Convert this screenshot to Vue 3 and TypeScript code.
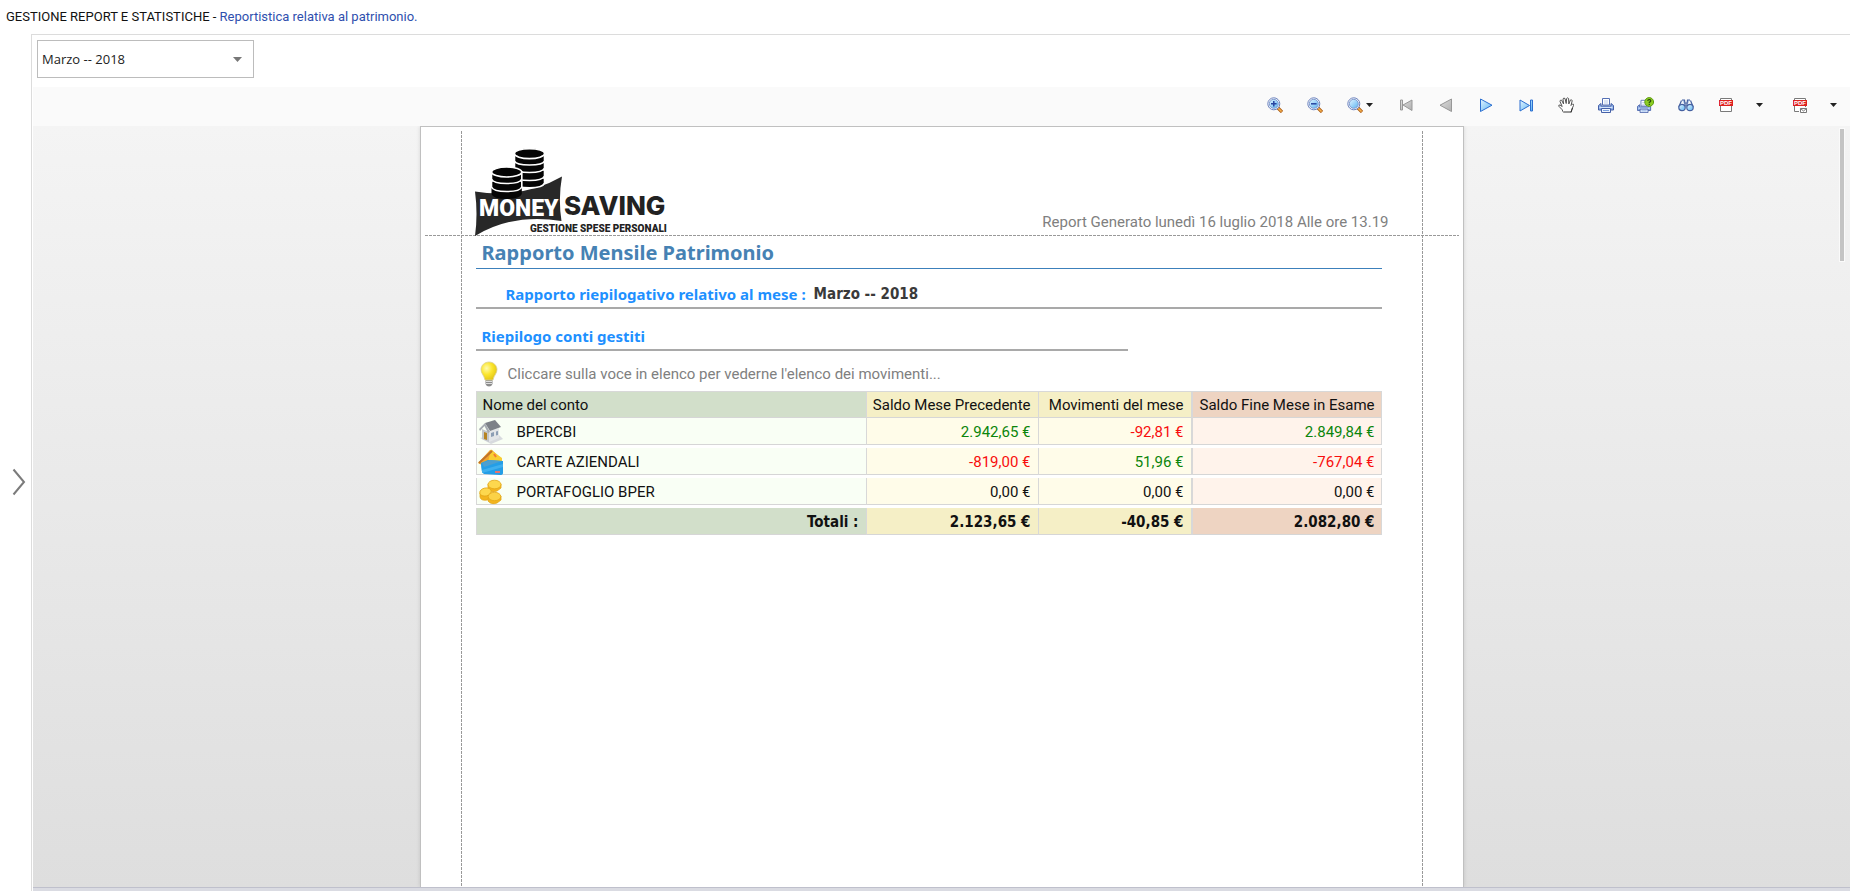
<script setup lang="ts">
import { ref } from 'vue'

interface Account {
  name: string
  icon: 'house' | 'cards' | 'coins'
  previous: number
  movements: number
  final: number
}

const months = ['Gennaio -- 2018', 'Febbraio -- 2018', 'Marzo -- 2018', 'Aprile -- 2018']
const month = ref('Marzo -- 2018')

const accounts: Account[] = [
  { name: 'BPERCBI', icon: 'house', previous: 2942.65, movements: -92.81, final: 2849.84 },
  { name: 'CARTE AZIENDALI', icon: 'cards', previous: -819, movements: 51.96, final: -767.04 },
  { name: 'PORTAFOGLIO BPER', icon: 'coins', previous: 0, movements: 0, final: 0 },
]

const sum = (key: 'previous' | 'movements' | 'final') =>
  accounts.reduce((total, account) => total + account[key], 0)

const money = (value: number) => {
  const [whole, cents] = Math.abs(value).toFixed(2).split('.')
  return `${value < 0 ? '-' : ''}${whole.replace(/\B(?=(\d{3})+$)/g, '.')},${cents} €`
}

const tone = (value: number) => (value > 0 ? 'positive' : value < 0 ? 'negative' : '')
</script>

<template>
  <div class="app">
    <header class="heading">
      <span>GESTIONE REPORT E STATISTICHE - </span><span class="subject">Reportistica relativa al patrimonio.</span>
    </header>

    <div class="body">
      <button class="expander" type="button" aria-label="Espandi menu">
        <svg width="14" height="28" viewBox="0 0 14 28"><path d="M1.500 1.500L12 14L1.500 26.500" fill="none" stroke="#7b7b7b" stroke-width="2" /></svg>
      </button>

      <main class="panel">
        <div class="filter">
          <div class="picker">
            <select v-model="month" aria-label="Mese">
              <option v-for="m in months" :key="m">{{ m }}</option>
            </select>
            <svg class="picker-arrow" width="9" height="5" viewBox="0 0 9 5"><path d="M0 0H9L4.500 5Z" fill="#777" /></svg>
          </div>
        </div>

        <div class="toolbar" role="toolbar">
          <svg width="0" height="0" class="defs">
            <defs>
              <linearGradient id="blue" x1="0" y1="0" x2="1" y2="1"><stop offset="0" stop-color="#e4f5ff" /><stop offset="1" stop-color="#5bb4f3" /></linearGradient>
              <linearGradient id="grey" x1="0" y1="0" x2="1" y2="1"><stop offset="0" stop-color="#dedede" /><stop offset="1" stop-color="#b0b0b0" /></linearGradient>
              <g id="lens">
                <path d="M10.500 10.500L15 15" stroke="#a8560f" stroke-width="3.200" />
                <path d="M11 11L14.600 14.600" stroke="#f5b04c" stroke-width="1.600" />
                <circle cx="6.800" cy="6.800" r="6" fill="#fff" stroke="#6c82bd" />
                <circle cx="6.800" cy="6.800" r="4.500" fill="url(#blue)" stroke="#7f9bd0" />
              </g>
              <g id="printer">
                <path d="M4.500 1.500H11.500V8H4.500Z" fill="#fff" stroke="#5570b5" />
                <path d="M6 4H10M6 6H10" stroke="#b9cbea" />
                <path d="M3 6.500V9H13V6.500L15.500 8.500V13H.500V8.500Z" fill="#8fb0e6" stroke="#4560a8" />
                <path d="M1.500 10.500H14.500" stroke="#d5e4fb" />
                <path d="M3.500 11.500H12.500V15.500H3.500Z" fill="#eef5ff" stroke="#4560a8" />
                <path d="M5 13.500H11" stroke="#7ba1df" />
              </g>
              <g id="pdf">
                <path d="M2.500 8V14.500H13.500V8" fill="#fff" stroke="#7a7a7a" />
                <path d="M2.500 3V1.500H13.500V3" fill="#fff" stroke="#7a7a7a" />
                <rect x="1" y="3" width="14" height="6" fill="#de1f1f" />
              </g>
            </defs>
          </svg>

          <button type="button" aria-label="Ingrandisci"><svg width="16" height="16"><use href="#lens" /><path d="M4 6.800H9.600M6.800 4V9.600" stroke="#2744a0" stroke-width="1.500" /></svg></button>
          <button type="button" aria-label="Riduci"><svg width="16" height="16"><use href="#lens" /><path d="M4 6.800H9.600" stroke="#2744a0" stroke-width="1.500" /></svg></button>
          <button type="button" class="with-arrow" aria-label="Zoom">
            <svg width="16" height="16"><use href="#lens" /></svg>
            <svg width="7" height="4"><path d="M0 0H7L3.500 4Z" fill="#222" /></svg>
          </button>
          <button type="button" aria-label="Prima pagina"><svg width="16" height="16"><path d="M2.500 3V13H4.500V3Z M14 3V13.500L5 8Z" fill="url(#grey)" stroke="#989898" /></svg></button>
          <button type="button" aria-label="Pagina precedente"><svg width="16" height="16"><path d="M13.500 2V14.500L2 8.200Z" fill="url(#grey)" stroke="#989898" /></svg></button>
          <button type="button" aria-label="Pagina successiva"><svg width="16" height="16"><path d="M2.500 2V14.500L14 8.200Z" fill="url(#blue)" stroke="#2c6fd0" /></svg></button>
          <button type="button" aria-label="Ultima pagina"><svg width="16" height="16"><path d="M2 3V14L11.500 8.500Z M12.500 3V14H14.500V3Z" fill="url(#blue)" stroke="#2c6fd0" /></svg></button>
          <button type="button" aria-label="Trascina">
            <svg width="16" height="16">
              <path d="M5.500 15.500L4 12.500L.800 9.200Q.300 7.800 2 8L4.200 9.500L2 4.500Q1.800 2.800 3.600 3.200L5.600 7L5 2Q5.500 .400 7 1.500L8.200 6.500L8.600 1.500Q9.500 .200 10.600 1.500L10.800 7L12.400 3Q13.800 2.200 14.200 3.800L13 8.500L14.500 7Q16 6.800 15.500 8.500L14 12L13.200 15.500" fill="#fff" stroke="#555" />
              <path d="M6 15H13L14.500 11" fill="none" stroke="#333" />
            </svg>
          </button>
          <button type="button" aria-label="Stampa"><svg width="16" height="16"><use href="#printer" /></svg></button>
          <button type="button" aria-label="Opzioni di stampa">
            <svg width="17" height="16">
              <use href="#printer" transform="translate(0 2) scale(.88)" />
              <circle cx="12.200" cy="5" r="4.400" fill="#8ccd22" stroke="#5d9c10" />
              <path d="M10.700 3.900Q10.800 2.500 12.300 2.500Q13.900 2.600 13.700 4Q13.500 4.800 12.300 5.300V6.200M12.300 7V8" fill="none" stroke="#28480a" stroke-width="1.200" />
            </svg>
          </button>
          <button type="button" aria-label="Cerca">
            <svg width="16" height="16">
              <path d="M4 3H6.500L7.300 9.500M12 3H9.500L8.700 9.500M7 6H9" fill="#b5cbea" stroke="#4560a0" stroke-width="1.200" />
              <path d="M3.500 3.500L.800 10M12.500 3.500L15.200 10" stroke="#4560a0" stroke-width="1.200" />
              <circle cx="4" cy="10.500" r="3.200" fill="url(#blue)" stroke="#4560a0" stroke-width="1.200" />
              <circle cx="12" cy="10.500" r="3.200" fill="url(#blue)" stroke="#4560a0" stroke-width="1.200" />
            </svg>
          </button>
          <button type="button" aria-label="Esporta PDF">
            <svg width="16" height="16"><use href="#pdf" /><text x="8" y="8" class="pdf-mark">PDF</text></svg>
          </button>
          <button type="button" class="arrow" aria-label="Formati di esportazione"><svg width="7" height="4"><path d="M0 0H7L3.500 4Z" fill="#222" /></svg></button>
          <button type="button" class="mail" aria-label="Invia PDF">
            <svg width="16" height="16">
              <use href="#pdf" /><text x="8" y="8" class="pdf-mark">PDF</text>
              <rect x="7" y="10" width="9" height="6" fill="#fafafa" />
              <path d="M8.500 11.500H14.500V15.500H8.500ZL11.500 14L14.500 11.500" fill="#fff" stroke="#777" />
            </svg>
          </button>
          <button type="button" class="arrow" aria-label="Formati di invio"><svg width="7" height="4"><path d="M0 0H7L3.500 4Z" fill="#222" /></svg></button>
        </div>

        <div class="viewer">
          <article class="page">
            <div class="guide guide-left"></div>
            <div class="guide guide-right"></div>

            <div class="letterhead">
              <svg class="logo" width="193" height="88" viewBox="0 0 193 88" role="img" aria-label="Money Saving, gestione spese personali">
                <path d="M0 43.500Q48 51 87 28.500Q83 51 86.500 73Q38 65 0 88Q3 66 0 43.500Z" fill="#282828" />
                <g fill="#050505" stroke="#fff" stroke-width="1.600">
                  <path d="M39.500 30V35Q41 39.800 54.500 39.800Q68 39.800 69.500 35V30Z" />
                  <path d="M39.500 22V28Q41 32.500 54.500 32.500Q68 32.500 69.500 28V22Z" />
                  <path d="M39.500 14V20Q41 24.500 54.500 24.500Q68 24.500 69.500 20V14Z" />
                  <path d="M39.500 6V13Q41 17 54.500 17Q68 17 69.500 13V6Z" />
                  <ellipse cx="54.500" cy="5.600" rx="15" ry="5" />
                </g>
                <g fill="#050505" stroke="#fff" stroke-width="1.600">
                  <path d="M16.500 40V46Q18 51 31.700 51Q45 51 46.800 46V40Z" stroke="none" />
                  <path d="M16.500 33V39Q18 43.500 31.700 43.500Q45 43.500 46.800 39V33Z" />
                  <path d="M16.500 24V31Q18 35.500 31.700 35.500Q45 35.500 46.800 31V24Z" />
                  <ellipse cx="31.700" cy="24" rx="15" ry="5" />
                </g>
                <text x="4" y="68" class="logo-money">MONEY</text>
                <text x="89" y="67" class="logo-saving">SAVING</text>
                <text x="55" y="84" class="logo-tag">GESTIONE SPESE PERSONALI</text>
              </svg>
              <p class="generated">Report Generato lunedì 16 luglio 2018 Alle ore 13.19</p>
            </div>

            <div class="content">
              <h1>Rapporto Mensile Patrimonio</h1>
              <p class="period"><span>Rapporto riepilogativo relativo al mese :</span><strong>{{ month }}</strong></p>
              <h2>Riepilogo conti gestiti</h2>
              <p class="hint">
                <svg width="18" height="26" viewBox="0 0 18 26">
                  <defs><radialGradient id="glow" cx=".35" cy=".35" r=".7"><stop offset="0" stop-color="#fffbb0" /><stop offset=".5" stop-color="#fbe62e" /><stop offset="1" stop-color="#e2c414" /></radialGradient></defs>
                  <path d="M5.500 19H12.500V23Q11.500 25.500 9 25.500Q6.500 25.500 5.500 23Z" fill="#8c8c8c" />
                  <path d="M6 20.500H12M6 22.500H12" stroke="#ddd" />
                  <path d="M9 1C13.500 1 17 4.500 17 8.500C17 12.500 14 14 13 19H5C4 14 1 12.500 1 8.500C1 4.500 4.500 1 9 1Z" fill="url(#glow)" stroke="#d9cf9a" stroke-width=".800" />
                </svg>
                <span>Cliccare sulla voce in elenco per vederne l'elenco dei movimenti...</span>
              </p>

              <table>
                <colgroup><col /><col class="col-previous" /><col class="col-movements" /><col class="col-final" /></colgroup>
                <thead>
                  <tr>
                    <th scope="col">Nome del conto</th>
                    <th scope="col">Saldo Mese Precedente</th>
                    <th scope="col">Movimenti del mese</th>
                    <th scope="col">Saldo Fine Mese in Esame</th>
                  </tr>
                </thead>
                <tbody>
                  <tr v-for="account in accounts" :key="account.name">
                    <td>
                      <a href="#" class="account">
                        <svg v-if="account.icon === 'house'" width="26" height="26" viewBox="0 0 26 26">
                          <path d="M2 19L13 25L25 20L20 15Z" fill="#d7dade" />
                          <path d="M4 10L11 13V23L4 20Z" fill="#c3c7cc" /><path d="M11 12L21 9V19L11 23Z" fill="#e3e5e8" />
                          <path d="M1 10L7 4L12 13L10 14L6.500 7L2 12Z" fill="#a6abb2" /><path d="M7 4L17 1L23 8L12 12Z" fill="#7d8188" />
                          <path d="M6 13L9 14V21L6 20Z" fill="#b68423" /><path d="M13 14L16 13V17L13 18ZM18 12.500L20 12V16L18 16.500Z" fill="#8d9eb5" />
                        </svg>
                        <svg v-else-if="account.icon === 'cards'" width="26" height="26" viewBox="0 0 26 26">
                          <path d="M0 14L12 1Q14 0 15 2L24 10L13 21Z" fill="#f2a62b" /><path d="M13 1L24 9V15L9 17Z" fill="#f8ce32" />
                          <path d="M1 14L14 2" stroke="#bf742b" stroke-width="2" /><path d="M16 5L18 8" stroke="#f37a35" stroke-width="2" />
                          <path d="M3 14L10 11L25 12V24Q25 26 22 26L6 25Q3 24 3 14Z" fill="#249ee6" /><path d="M4 21L25 15V18L4 24Z" fill="#3fb0ee" />
                          <path d="M4 14L12 11L24 12L6 18Z" fill="#4c9fd0" /><path d="M17 23H22" stroke="#e6736d" stroke-width="2" />
                        </svg>
                        <svg v-else width="26" height="26" viewBox="0 0 26 26">
                          <g stroke="#e3a717" stroke-width=".800">
                            <path d="M10 5V10Q13 14 19 12L23 9V5Z" fill="#f3b51f" /><ellipse cx="16.500" cy="5.500" rx="6.500" ry="4.300" fill="#fdd84e" />
                            <path d="M2 14V18Q3 22 9 21L13 18V13Z" fill="#f3b51f" /><ellipse cx="7.500" cy="13" rx="5.800" ry="4" fill="#fdd84e" transform="rotate(-12 7.500 13)" />
                            <path d="M10 19V22Q13 26 19 24L23 21V17Z" fill="#f3b51f" /><ellipse cx="16.500" cy="17.500" rx="6.300" ry="4.200" fill="#fbd247" />
                          </g>
                        </svg>
                        <span>{{ account.name }}</span>
                      </a>
                    </td>
                    <td :class="tone(account.previous)">{{ money(account.previous) }}</td>
                    <td :class="tone(account.movements)">{{ money(account.movements) }}</td>
                    <td :class="tone(account.final)">{{ money(account.final) }}</td>
                  </tr>
                </tbody>
                <tfoot>
                  <tr>
                    <th scope="row">Totali :</th>
                    <td>{{ money(sum('previous')) }}</td>
                    <td>{{ money(sum('movements')) }}</td>
                    <td>{{ money(sum('final')) }}</td>
                  </tr>
                </tfoot>
              </table>
            </div>
          </article>
          <div class="scroll-thumb"></div>
        </div>
        <div class="status"></div>
      </main>
    </div>
  </div>
</template>

<style>
html, body { margin: 0; overflow: hidden; }
</style>

<style scoped>
.app { height: 100vh; display: flex; flex-direction: column; background: #fff; font: 13px/18px "Open Sans", "Noto Sans", sans-serif; color: #111; }
.heading { flex: none; padding: 8px 6px; font: 13px/18px Roboto, "Noto Sans", sans-serif; white-space: pre-wrap; }
.subject { color: #2f4fae; }
.body { flex: 1; display: flex; min-height: 0; }
button { border: 0; padding: 0; background: none; display: flex; align-items: center; justify-content: center; cursor: pointer; }
.expander { width: 31px; padding: 38px 0 0 7px; }
.panel { flex: 1; min-width: 0; display: flex; flex-direction: column; border: solid #dcdcdc; border-width: 1px 0 0 1px; padding-left: 1px; margin-right: 1px; }

.filter { padding: 5px 4px 9px; }
.picker { position: relative; width: 217px; }
.picker select { display: block; appearance: none; box-sizing: border-box; width: 100%; height: 38px; padding: 0 24px 0 4px; border: 1px solid #bcbcbc; border-radius: 0; background: #fff; color: #222; font: inherit; }
.picker-arrow { position: absolute; right: 12px; top: 17px; pointer-events: none; }

.toolbar { box-sizing: border-box; height: 39px; flex: none; display: flex; justify-content: flex-end; gap: 1px; padding: 0 3px 3px 0; background: #fafafa; }
.defs { position: absolute; }
.toolbar button { width: 39px; }
.toolbar .with-arrow { width: 50px; gap: 3px; }
.toolbar .arrow { width: 27px; }
.toolbar .mail { margin-left: 6px; }
.pdf-mark { font: 700 6px "Liberation Sans", sans-serif; fill: #fff; text-anchor: middle; }

.viewer { position: relative; flex: 1; min-height: 0; overflow: hidden; display: flex; justify-content: center; background: linear-gradient(#f4f4f4, #dedede); }
.scroll-thumb { position: absolute; top: 3px; right: 6px; width: 4px; height: 132px; background: #c4c4c4; outline: 1px solid #fafafa; }
.status { flex: none; height: 3px; border-top: 1px solid #bfc0cc; background: #dadbe2; }

.page { position: relative; box-sizing: border-box; width: 1044px; max-width: 100%; padding: 4px; border: 1px solid #c0c0c0; border-bottom: 0; background: #fff; box-shadow: 0 0 4px rgba(0, 0, 0, .12); font: 15px/20px Roboto, "Noto Sans", sans-serif; }
.guide { position: absolute; top: 4px; bottom: 1px; width: 1px; background: repeating-linear-gradient(#999 0 3px, transparent 3px 4px); }
.guide-left { left: 40px; }
.guide-right { right: 40px; }
.letterhead { box-sizing: border-box; height: 105px; display: flex; justify-content: space-between; align-items: flex-end; padding: 0 70px 0 50px; background: repeating-linear-gradient(90deg, #999 0 3px, transparent 3px 4px) bottom / 100% 1px no-repeat; }
.logo { display: block; }
.logo-money { font: 900 23px Roboto, sans-serif; fill: #fff; }
.logo-saving { font: 800 26px Inter, sans-serif; fill: #222; }
.logo-tag { font: 900 10px Roboto, sans-serif; fill: #222; }
.generated { margin: 0 0 4px; color: #808080; }

.content { padding: 0 77px 0 51px; }
h1, h2, p { margin: 0; }
h1 { padding: 5px 6px 3px; border-bottom: 1px solid #3c80bb; color: #4682b4; font: 700 20px/24px "Noto Sans", sans-serif; }
.period { display: flex; gap: 8px; padding: 15px 30px 3px; border-bottom: 2px solid #a9a9a9; color: #3a3a3a; font: 700 15px/20px "Noto Sans", sans-serif; }
.period strong { font-family: "DejaVu Sans Condensed", "DejaVu Sans", sans-serif; }
.period span, h2 { color: #1e90ff; }
h2 { box-sizing: border-box; width: 72%; padding: 17px 6px 3px; border-bottom: 2px solid #a9a9a9; font: 700 15px/20px "Noto Sans", sans-serif; }
.hint { display: flex; align-items: center; gap: 10px; height: 26px; padding: 10px 0 4px 4px; color: #808080; }

table { width: 100%; table-layout: fixed; border-collapse: separate; border-spacing: 0; color: #111; }
.col-previous { width: 172px; }
.col-movements { width: 153px; }
.col-final { width: 191px; }
th, td { box-sizing: border-box; height: 27px; padding: 0 7px; text-align: right; font-weight: 400; vertical-align: middle; background-clip: padding-box; box-shadow: inset 1px 0 #d8d8d8, inset 0 -1px #d6d6d6; }
th:last-child, td:last-child { box-shadow: inset 2px 0 #d8d8d8, inset -1px 0 #d8d8d8, inset 0 -1px #d6d6d6; }
thead th { border-top: 1px solid #d8d8d8; }
thead th:first-child { text-align: left; }
tbody td { height: 30px; border-bottom: 3px solid #fff; }
tbody td:first-child { padding: 0 2px; text-align: left; }
th:nth-child(1), tfoot th { background-color: #d2dfca; }
th:nth-child(2), th:nth-child(3), tfoot td:nth-child(2), tfoot td:nth-child(3) { background-color: #f5efc6; }
th:nth-child(4), tfoot td:nth-child(4) { background-color: #eed4c2; }
tbody td:nth-child(1) { background-color: #f9fff5; }
tbody td:nth-child(2), tbody td:nth-child(3) { background-color: #fffce9; }
tbody td:nth-child(4) { background-color: #fff3eb; }
.account { display: flex; align-items: center; gap: 13px; height: 26px; color: inherit; text-decoration: none; }
.positive { color: #0b850b; }
.negative { color: #f80d0d; }
tfoot th, tfoot td { font: 700 15px/20px "DejaVu Sans Condensed", "DejaVu Sans", sans-serif; }
</style>
